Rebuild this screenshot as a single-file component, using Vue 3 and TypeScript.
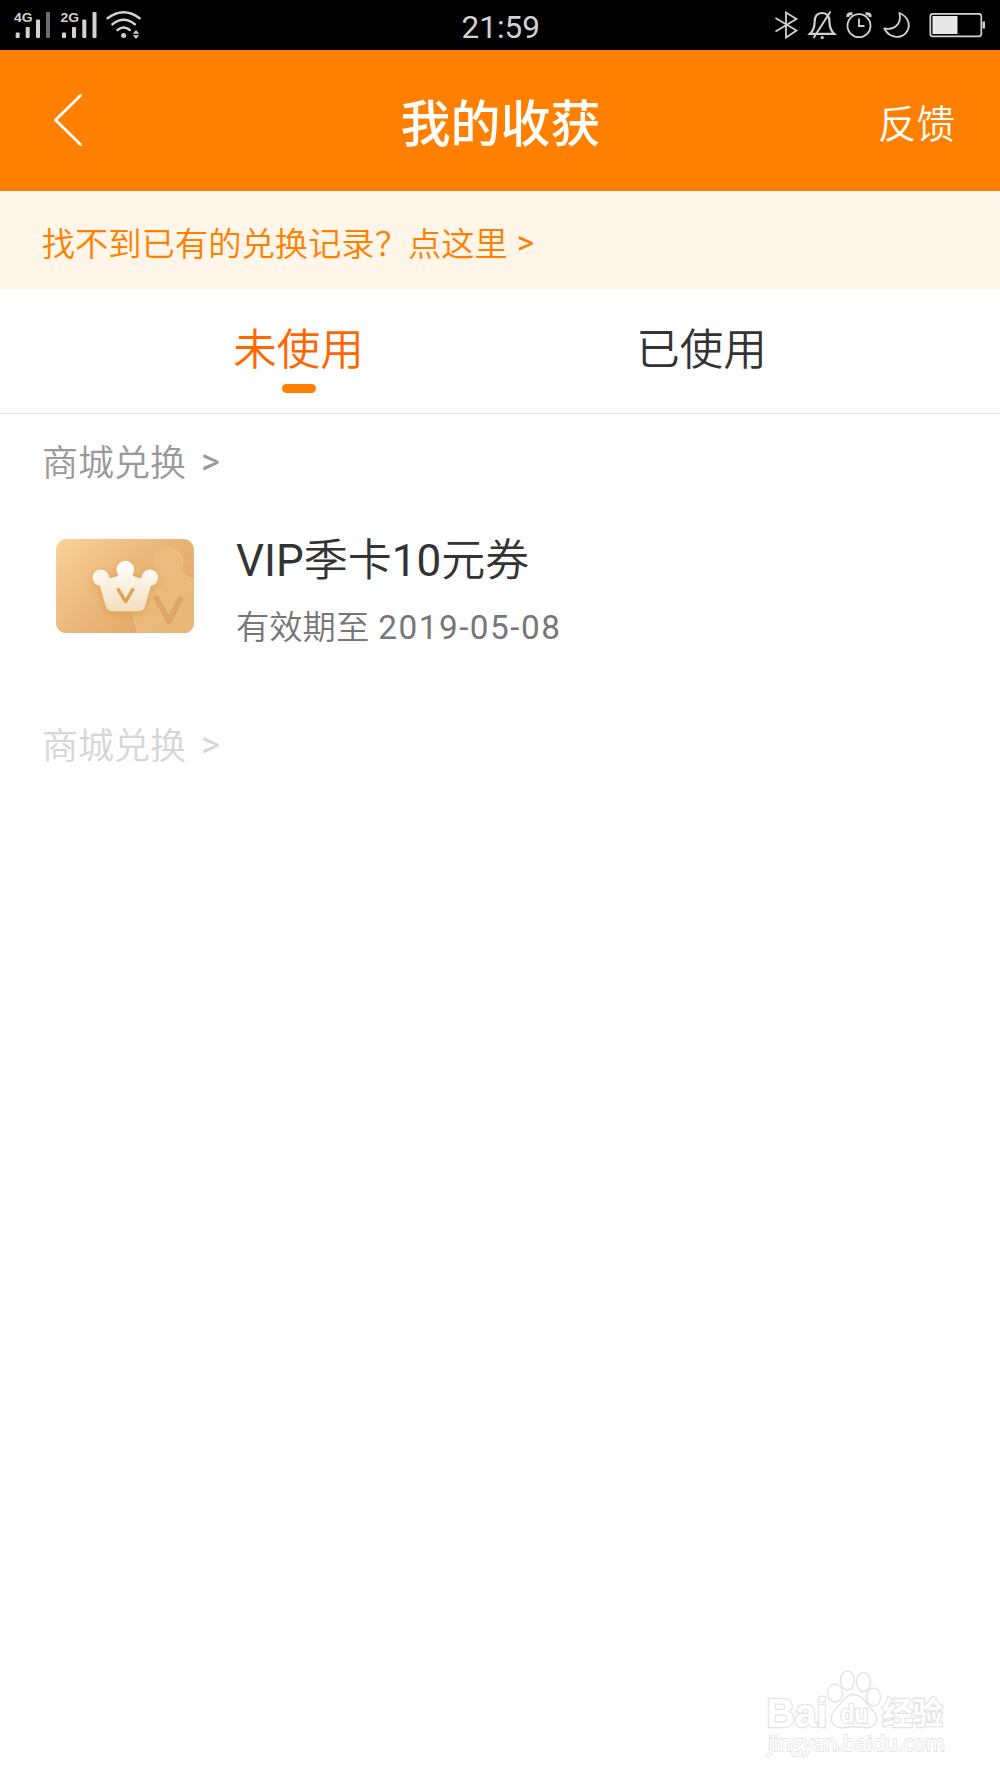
<script setup lang="ts">
import { ref } from 'vue'

interface Tab {
  id: string
  label: string
}

interface Voucher {
  title: string
  expiry: string
}

const tabs: Tab[] = [
  { id: 'unused', label: '未使用' },
  { id: 'used', label: '已使用' },
]
const active = ref<string>('unused')
const vouchers: Voucher[] = [{ title: 'VIP季卡10元券', expiry: '2019-05-08' }]

// Separates Latin letters and digits from Chinese so each can carry its own weight.
const segments = (text: string): string[] => text.split(/([A-Z0-9]+)/).filter(Boolean)
const isLatin = (text: string): boolean => /^[A-Z0-9]/.test(text)
</script>

<template>
  <div class="screen">
    <div class="status">
      <svg class="signals" width="160" height="50" viewBox="0 0 160 50" fill="#d2d2d2">
        <text x="14" y="22" class="net" textLength="18.5" lengthAdjust="spacingAndGlyphs">4G</text>
        <rect x="15.7" y="32.5" width="4" height="5.5" rx="1" />
        <rect x="25.7" y="27" width="4" height="11" rx="1" />
        <rect x="36" y="19.5" width="4" height="18.5" rx="1" />
        <rect x="46" y="12" width="4" height="26" rx="1" fill="#6c6c6c" />
        <text x="60.5" y="22" class="net" textLength="18.5" lengthAdjust="spacingAndGlyphs">2G</text>
        <rect x="62" y="32.5" width="4" height="5.5" rx="1" />
        <rect x="72" y="27" width="4" height="11" rx="1" />
        <rect x="82.3" y="19.5" width="4" height="18.5" rx="1" />
        <rect x="92.5" y="12" width="4" height="26" rx="1" />
        <g fill="none" stroke="#d2d2d2" stroke-width="2.5" stroke-linecap="round">
          <path d="M107.6 18.2Q123.6 6.2 139.6 18.2" />
          <path d="M112.5 24.2Q123.6 15.2 134.8 24.2" />
          <path d="M117.5 30Q123.6 25 129.8 30" />
        </g>
        <circle cx="123.6" cy="35.5" r="2.5" />
        <path d="M132.8 33.8L136 30L139.2 33.8ZM132.8 35.2L136 39L139.2 35.2Z" />
      </svg>
      <time class="clock">21:59</time>
      <svg class="indicators" width="240" height="50" viewBox="0 0 240 50" fill="none" stroke="#d2d2d2" stroke-width="1.8">
        <path d="M15.5 18L36.5 30.5L26 37.5V12.5L36.5 19L15.5 31.5" />
        <path d="M50 33.8Q54.6 29.5 54.6 22C54.6 16 57.5 13 62.2 13S69.500 16 69.500 22Q69.500 29.500 74.200 33.800Z" stroke-width="2.2" />
        <path d="M70.5 11.5L53.5 38" stroke-width="2" />
        <circle cx="62.2" cy="37.5" r="1.6" fill="#d2d2d2" stroke="none" />
        <circle cx="99" cy="25.7" r="11.5" />
        <path d="M99 18.5V26H104.5" />
        <path d="M88 17Q87 13 92.5 13.8M110 17Q111 13 105.5 13.8" stroke-width="3" />
        <path d="M139.5 13C147 16 151 24 147.5 30.5C143 39 130 39.5 124.3 28.5C133.5 30.5 142 24.5 139.5 13Z" stroke-linejoin="round" />
        <rect x="170.3" y="13.8" width="51" height="22.5" rx="2.5" stroke-width="1.7" />
        <path d="M172.5 16H197.5V34H172.5Z" fill="#e8e8e8" stroke="none" />
        <path d="M222.5 21.5H225V28.5H222.5Z" fill="#d2d2d2" stroke="none" />
      </svg>
    </div>

    <header class="header">
      <button class="back" aria-label="返回">
        <svg width="30" height="54" viewBox="0 0 30 54" fill="none" stroke="#fff" stroke-width="2.8" stroke-linecap="round" stroke-linejoin="round">
          <path d="M27.5 2.5L2.5 27L27.5 51.5" />
        </svg>
      </button>
      <h1 class="title">我的收获</h1>
      <a class="feedback">反馈</a>
    </header>

    <a class="notice">找不到已有的兑换记录？点这里<span class="gt">&gt;</span></a>

    <nav class="tabs">
      <button
        v-for="tab in tabs"
        :key="tab.id"
        class="tab"
        :class="{ active: tab.id === active }"
        @click="active = tab.id"
      >{{ tab.label }}</button>
    </nav>

    <main class="content">
      <a class="source">商城兑换<span class="gt">&gt;</span></a>
      <article v-for="voucher in vouchers" :key="voucher.title" class="voucher">
        <svg class="card" width="138" height="94.4" viewBox="49 57 412 282">
          <defs>
            <linearGradient id="cardFill" x1="0" y1="0" x2="1" y2="0.7">
              <stop offset="0" stop-color="#f9d09b" />
              <stop offset="0.55" stop-color="#eab679" />
              <stop offset="1" stop-color="#e3a667" />
            </linearGradient>
            <linearGradient id="crownFill" x1="0" y1="0" x2="0" y2="1">
              <stop offset="0" stop-color="#ffffff" />
              <stop offset="1" stop-color="#f4dfbf" />
            </linearGradient>
            <clipPath id="cardClip"><rect x="49" y="57" width="412" height="282" rx="32" /></clipPath>
            <filter id="glow" x="-40%" y="-40%" width="180%" height="180%">
              <feDropShadow dx="0" dy="7" stdDeviation="15" flood-color="#d98a32" flood-opacity="0.55" />
            </filter>
          </defs>
          <g clip-path="url(#cardClip)">
            <rect x="49" y="57" width="412" height="282" fill="url(#cardFill)" />
            <g fill="#ebc081" fill-opacity="0.7">
              <path d="M290 339L270 262Q265 235 285 190Q340 205 356 160A45 45 0 1 1 424 148Q440 171 461 172V339Z" />
              <circle cx="270" cy="164" r="33" />
            </g>
            <path d="M349 234L386 303L421 236" fill="none" stroke="#dfa66a" stroke-width="17" stroke-linecap="round" stroke-linejoin="round" />
            <path
              filter="url(#glow)"
              fill="url(#crownFill)"
              d="M180 197A24.5 24.5 0 1 1 207 173Q222 176 235 165A26.5 26.5 0 1 1 277 165Q290 176 305 173A24.5 24.5 0 1 1 332 197L315 256Q311 273 294 273H218Q201 273 197 256Z"
            />
            <path d="M235 208L257 244L278 208" fill="none" stroke="#dfa050" stroke-width="10" stroke-linecap="round" stroke-linejoin="round" />
          </g>
        </svg>
        <div class="info">
          <h2 class="name"><span v-for="(part, i) in segments(voucher.title)" :key="i" :class="{ latin: isLatin(part) }">{{ part }}</span></h2>
          <p class="expiry">有效期至 <span class="date">{{ voucher.expiry }}</span></p>
        </div>
      </article>
      <a class="source faded">商城兑换<span class="gt">&gt;</span></a>
    </main>

    <svg class="watermark" width="220" height="128" viewBox="0 0 220 128" fill="#fff" stroke="#e4e4e4" stroke-width="1.4">
      <ellipse cx="85" cy="43" rx="7.5" ry="9" />
      <ellipse cx="97.5" cy="30.5" rx="7" ry="9.5" />
      <ellipse cx="113.5" cy="32" rx="7" ry="9.5" />
      <ellipse cx="123.5" cy="47" rx="7" ry="9" />
      <path d="M103.5 44.5C97 44.5 94 50 89.5 55C84 60 80.5 64 81.5 70C82.5 76 88 78.5 94 77.5Q104 76 114 77.5C121 78.5 126 75.5 126.5 69.5C127 63 122 60 118 55C114 50 110.5 44.5 103.5 44.5Z" />
      <g class="outline">
        <text x="16.5" y="77" font-size="41" textLength="61" lengthAdjust="spacingAndGlyphs">Bai</text>
        <text x="90.5" y="73" font-size="25" textLength="28" lengthAdjust="spacingAndGlyphs">du</text>
        <text x="132" y="74" font-size="31" textLength="61" lengthAdjust="spacingAndGlyphs">经验</text>
        <text x="18" y="101" font-size="21.5" class="url" textLength="177" lengthAdjust="spacingAndGlyphs">jingyan.baidu.com</text>
      </g>
    </svg>
  </div>
</template>

<style>
body {
  margin: 0;
  background: #fefefe;
}
</style>

<style scoped>
.screen {
  position: relative;
  display: flex;
  flex-direction: column;
  width: 1000px;
  height: 1778px;
  overflow: hidden;
  background: #fefefe;
  color: #333;
  font-family: Roboto, "Noto Sans CJK SC", sans-serif;
  font-weight: 350;
}
h1, h2, p {
  margin: 0;
}
button {
  padding: 0;
  border: 0;
  background: none;
  font: inherit;
  color: inherit;
}
.status {
  display: grid;
  grid-template-columns: 160px 1fr 240px;
  height: 50px;
  background: #000;
}
.net {
  font: 700 13px "Liberation Sans", sans-serif;
}
.clock {
  padding-left: 301.5px;
  color: #d2d2d2;
  font-size: 31.5px;
  font-weight: 400;
  line-height: 55px;
}
.header {
  display: grid;
  grid-template-columns: 200px 1fr 200px;
  align-items: center;
  height: 141px;
  background: #ff8000;
  color: #fff;
}
.back {
  display: flex;
  padding: 0 0 2px 53px;
}
.title {
  padding: 9px 0 0 1px;
  text-align: center;
  font-size: 50px;
  font-weight: 500;
  line-height: 70px;
}
.feedback {
  padding: 9px 45px 0 0;
  text-align: right;
  font-size: 38.5px;
  line-height: 60px;
}
.notice {
  display: block;
  box-sizing: border-box;
  height: 98px;
  padding: 4px 0 0 41.7px;
  background: #fff5e8;
  color: #ff8000;
  font-size: 33.3px;
  line-height: 100px;
}
.gt {
  position: relative;
  top: -2px;
  font-weight: 400;
}
.notice .gt {
  margin-left: 9px;
}
.tabs {
  display: grid;
  grid-template-columns: 403px 403px;
  justify-content: center;
  height: 124px;
  border-bottom: 1px solid #e5e5e5;
}
.tab {
  display: flex;
  flex-direction: column;
  align-items: center;
  font-size: 43.5px;
  line-height: 62px;
  padding-top: 31px;
}
.tab.active {
  color: #ff6600;
}
.tab.active::after {
  content: "";
  width: 34px;
  height: 9px;
  margin-top: 2px;
  border-radius: 4.5px;
  background: #ff8000;
}
.content {
  display: flex;
  flex-direction: column;
}
.source {
  padding: 25px 0 0 42px;
  color: #999;
  font-size: 36px;
  line-height: 50px;
}
.source .gt {
  margin-left: 15px;
}
.source.faded {
  padding-top: 73px;
  color: #d6d6d6;
}
.voucher {
  display: flex;
  gap: 42px;
  height: 117px;
  margin-top: 43px;
  padding-left: 56px;
}
.card {
  margin-top: 7px;
}
.name {
  padding-top: 2px;
  font-size: 44px;
  font-weight: 350;
  line-height: 54px;
}
.latin {
  font-weight: 400;
}
.expiry {
  margin-top: 13px;
  color: #777;
  font-size: 33.3px;
  line-height: 54px;
}
.date {
  margin-left: 1px;
  font-weight: 400;
  letter-spacing: 1.5px;
}
.watermark {
  position: absolute;
  left: 750px;
  top: 1650px;
}
.outline {
  font-family: "Liberation Sans", "Noto Sans CJK SC", sans-serif;
  font-weight: 700;
  paint-order: stroke;
  stroke-width: 2.4px;
}
.url {
  font-family: "Open Sans", sans-serif;
  font-weight: 400;
  stroke-width: 1.8px;
}
</style>
